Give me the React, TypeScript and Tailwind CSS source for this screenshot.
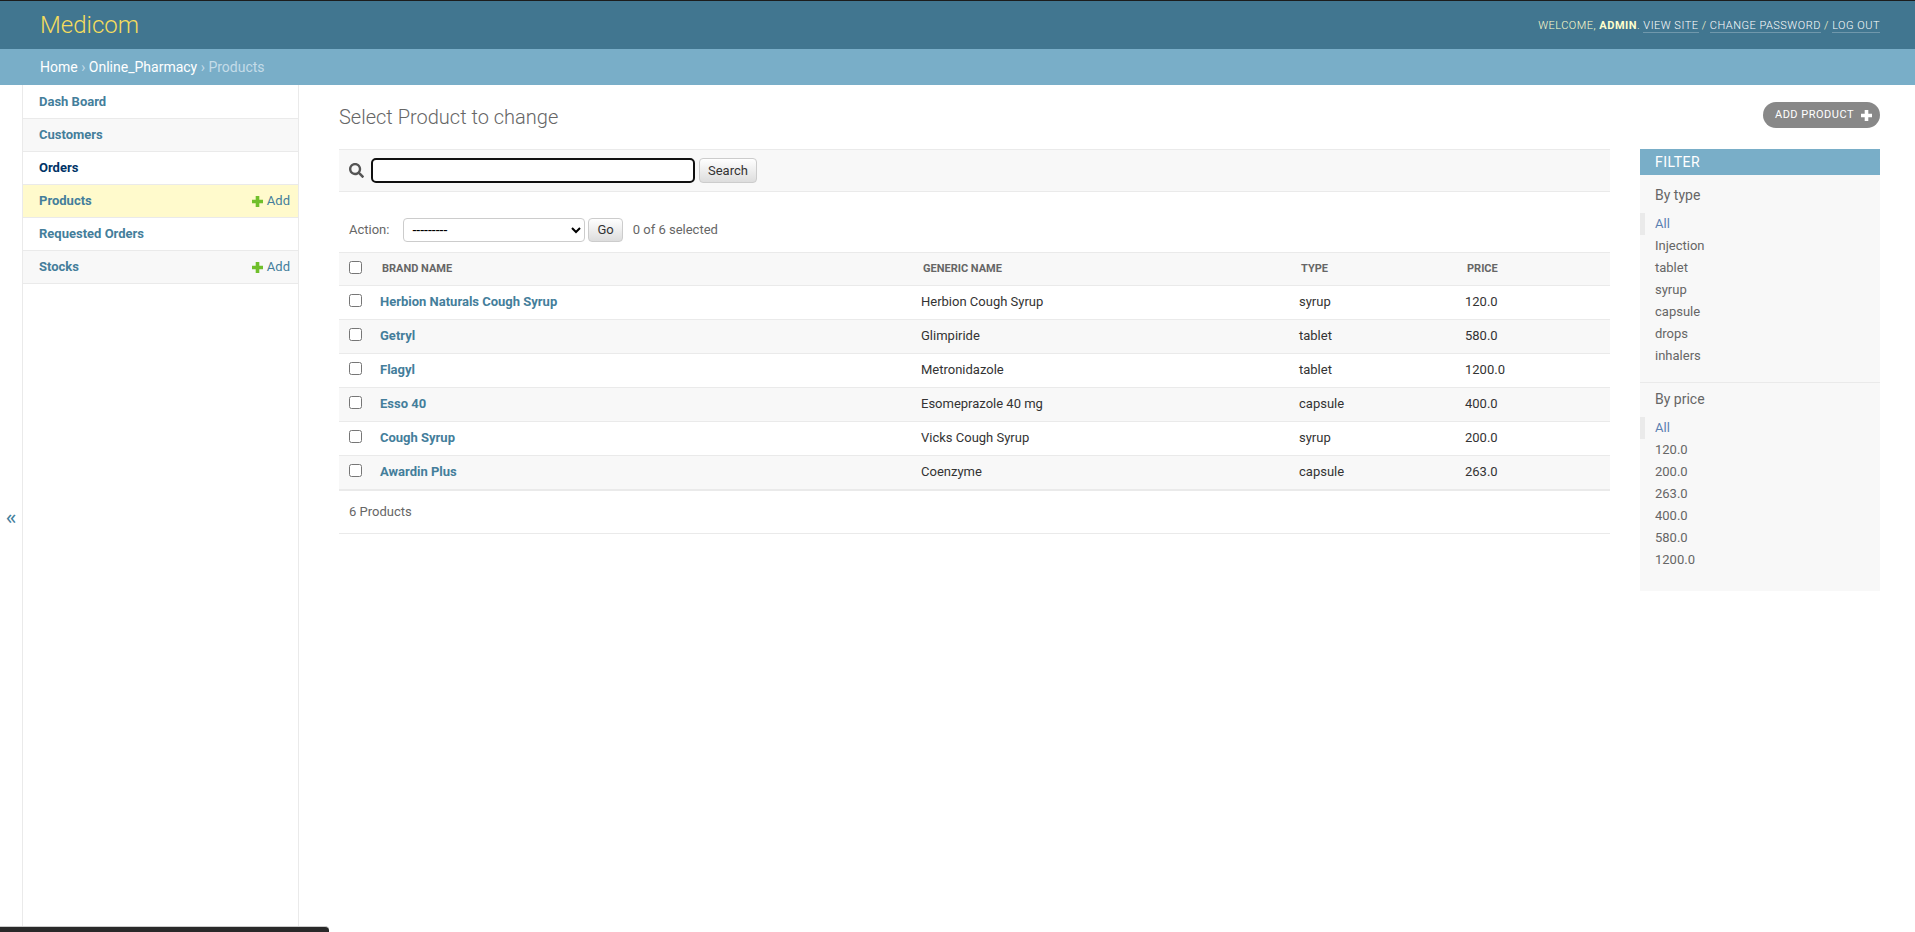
import { FaSearch } from 'react-icons/fa'

const models = [
  { name: 'Dash Board' },
  { name: 'Customers' },
  { name: 'Orders', hovered: true },
  { name: 'Products', current: true, canAdd: true },
  { name: 'Requested Orders' },
  { name: 'Stocks', canAdd: true },
]

const products = [
  { brand: 'Herbion Naturals Cough Syrup', generic: 'Herbion Cough Syrup', type: 'syrup', price: '120.0' },
  { brand: 'Getryl', generic: 'Glimpiride', type: 'tablet', price: '580.0' },
  { brand: 'Flagyl', generic: 'Metronidazole', type: 'tablet', price: '1200.0' },
  { brand: 'Esso 40', generic: 'Esomeprazole 40 mg', type: 'capsule', price: '400.0' },
  { brand: 'Cough Syrup', generic: 'Vicks Cough Syrup', type: 'syrup', price: '200.0' },
  { brand: 'Awardin Plus', generic: 'Coenzyme', type: 'capsule', price: '263.0' },
]

const typeFilters = ['All', 'Injection', 'tablet', 'syrup', 'capsule', 'drops', 'inhalers']
const priceFilters = ['All', '120.0', '200.0', '263.0', '400.0', '580.0', '1200.0']

const buttonStyle = 'rounded border border-[#ccc] bg-linear-to-b from-white to-[#ddd] text-[13px] leading-4 text-[#333]'

function PlusIcon({ className }: { className?: string }) {
  return (
    <svg viewBox="0 0 11 11" className={className} fill="currentColor" aria-hidden="true">
      <path d="M3.7 0h3.6v3.7H11v3.6H7.3V11H3.7V7.3H0V3.7h3.7z" />
    </svg>
  )
}

function Header() {
  const link = 'border-b border-white/25 text-white'
  return (
    <header className="flex h-[49px] items-center justify-between border-t border-[#1c1c1c] bg-[#417690] pl-10 pr-[35px] text-[#ffc]">
      <h1 className="text-2xl font-light text-[#f5dd5d]">
        <a href="#">Medicom</a>
      </h1>
      <div className="pt-0.5 text-[11px] font-light uppercase tracking-[0.5px]">
        Welcome, <strong className="font-bold">admin</strong>.{' '}
        <a href="#" className={link}>View site</a> / <a href="#" className={link}>Change password</a> /{' '}
        <a href="#" className={link}>Log out</a>
      </div>
    </header>
  )
}

function Sidebar() {
  return (
    <nav className="w-[276px] shrink-0 border-r border-[#eaeaea] pt-px" aria-label="Models">
      <ul>
        {models.map((model, i) => (
          <li
            key={model.name}
            className={`flex h-[33px] items-center justify-between border-b border-[#eaeaea] pl-4 pr-2 text-[13px] leading-4 ${
              model.current ? 'bg-[#fffacc]' : i % 2 ? 'bg-[#f8f8f8]' : 'bg-white'
            }`}
          >
            <a href="#" className={`font-bold ${model.hovered ? 'text-[#036]' : 'text-[#447e9b]'}`}>{model.name}</a>
            {model.canAdd && (
              <a href="#" className="flex items-center gap-1 text-[#447e9b]">
                <PlusIcon className="size-[11px] text-[#70bf2b]" />
                Add
              </a>
            )}
          </li>
        ))}
      </ul>
    </nav>
  )
}

function ProductTable() {
  return (
    <table className="w-full border-collapse text-left text-[13px] leading-4">
      <thead>
        <tr className="h-[33px] border-y border-[#eaeaea] bg-[#f8f8f8] align-top text-[11px] uppercase text-[#666]">
          <th className="w-[34px] pl-[10px] pt-2">
            <input type="checkbox" aria-label="Select all products" className="block size-[13px]" />
          </th>
          <th className="pl-[9px] pt-2 font-bold">Brand name</th>
          <th className="w-[378px] pl-[10px] pt-2 font-bold">Generic name</th>
          <th className="w-[166px] pl-[10px] pt-2 font-bold">Type</th>
          <th className="w-[153px] pl-[10px] pt-2 font-bold">Price</th>
        </tr>
      </thead>
      <tbody>
        {products.map((product) => (
          <tr key={product.brand} className="h-[34px] border-b border-[#eaeaea] align-top even:bg-[#f8f8f8] last:border-b-2">
            <td className="pl-[10px] pt-2">
              <input type="checkbox" aria-label={`Select ${product.brand}`} className="block size-[13px]" />
            </td>
            <th className="pl-[7px] pt-2 font-bold"><a href="#" className="text-[#447e9b]">{product.brand}</a></th>
            <td className="pl-2 pt-2">{product.generic}</td>
            <td className="pl-2 pt-2">{product.type}</td>
            <td className="pl-2 pt-2">{product.price}</td>
          </tr>
        ))}
      </tbody>
    </table>
  )
}

function FilterGroup({ title, options }: { title: string; options: string[] }) {
  return (
    <section className="border-b border-[#eaeaea] last:border-b-0">
      <h3 className="px-[15px] py-2 text-sm leading-4 text-[#666]">{title}</h3>
      <ul className="pb-[15px] pt-0.5 text-[13px] leading-[22px] text-[#666]">
        {options.map((option, i) => (
          <li key={option} className={i === 0 ? 'border-l-[5px] border-[#eaeaea] pl-[10px] text-[#5b80b2]' : 'pl-[15px]'}>
            <a href="#">{option}</a>
          </li>
        ))}
      </ul>
    </section>
  )
}

export default function App() {
  return (
    <div className="flex h-screen flex-col overflow-hidden bg-white font-[Roboto,'Liberation_Sans',sans-serif] text-[13px] text-[#333]">
      <Header />
      <nav className="h-9 shrink-0 bg-[#79aec8] px-10 text-sm leading-9 text-[#c4dce8]" aria-label="Breadcrumbs">
        <a href="#" className="text-white">Home</a> › <a href="#" className="text-white">Online_Pharmacy</a> › Products
      </nav>
      <div className="flex min-h-0 flex-1">
        <button
          type="button"
          aria-label="Toggle navigation"
          className="w-[23px] shrink-0 border-r border-[#eaeaea] pt-4 font-['Noto_Sans',sans-serif] text-xl text-[#447e9b]"
        >
          «
        </button>
        <Sidebar />
        <main className="min-w-0 flex-1 pl-10 pr-[35px] pt-[17px]">
          <div className="flex h-[47px] items-start justify-between">
            <h2 className="pt-[3px] text-xl leading-6 font-light text-[#666]">Select Product to change</h2>
            <a href="#" className="flex h-[26px] items-center gap-[7px] rounded-full bg-[#888] pl-3 pr-2 text-[11px] uppercase tracking-[0.5px] text-white">
              Add Product
              <PlusIcon className="size-[11px]" />
            </a>
          </div>
          <div className="flex items-start gap-[30px]">
            <div className="min-w-0 flex-1">
              <form className="flex h-[43px] items-center border-y border-[#eaeaea] bg-[#f8f8f8] pl-[10px]">
                <label htmlFor="searchbar" className="mr-[7px] text-[#555]">
                  <FaSearch className="size-[15px]" aria-label="Search" />
                </label>
                <input id="searchbar" type="text" className="h-[25px] w-[324px] rounded-[5px] border-2 border-[#101010] bg-white px-2 outline-none" />
                <button type="button" className={`${buttonStyle} ml-1 h-[25px] px-2`}>Search</button>
              </form>
              <div className="flex h-[60px] items-end pb-[10px] pl-[10px] text-[#666]">
                <label htmlFor="action" className="mr-[14px] leading-6">Action:</label>
                <select id="action" className="h-6 w-[182px] rounded border border-[#ccc] bg-white pl-1 text-sm text-black">
                  <option>---------</option>
                </select>
                <button type="button" className={`${buttonStyle} ml-[3px] h-6 px-2`}>Go</button>
                <span className="ml-[10px] leading-6">0 of 6 selected</span>
              </div>
              <ProductTable />
              <p className="border-b border-[#eaeaea] px-[10px] py-[13px] leading-4 text-[#666]">6 Products</p>
            </div>
            <aside className="w-60 shrink-0 bg-[#f8f8f8] pb-[5px]">
              <h2 className="mb-1 bg-[#79aec8] px-[15px] py-[5px] text-sm leading-4 uppercase tracking-[0.5px] text-white">Filter</h2>
              <FilterGroup title="By type" options={typeFilters} />
              <FilterGroup title="By price" options={priceFilters} />
            </aside>
          </div>
        </main>
      </div>
      <div className="absolute bottom-0 left-0 h-1.5 w-[329px] rounded-tr border-t border-[#ccc] bg-[#292929]" />
    </div>
  )
}
